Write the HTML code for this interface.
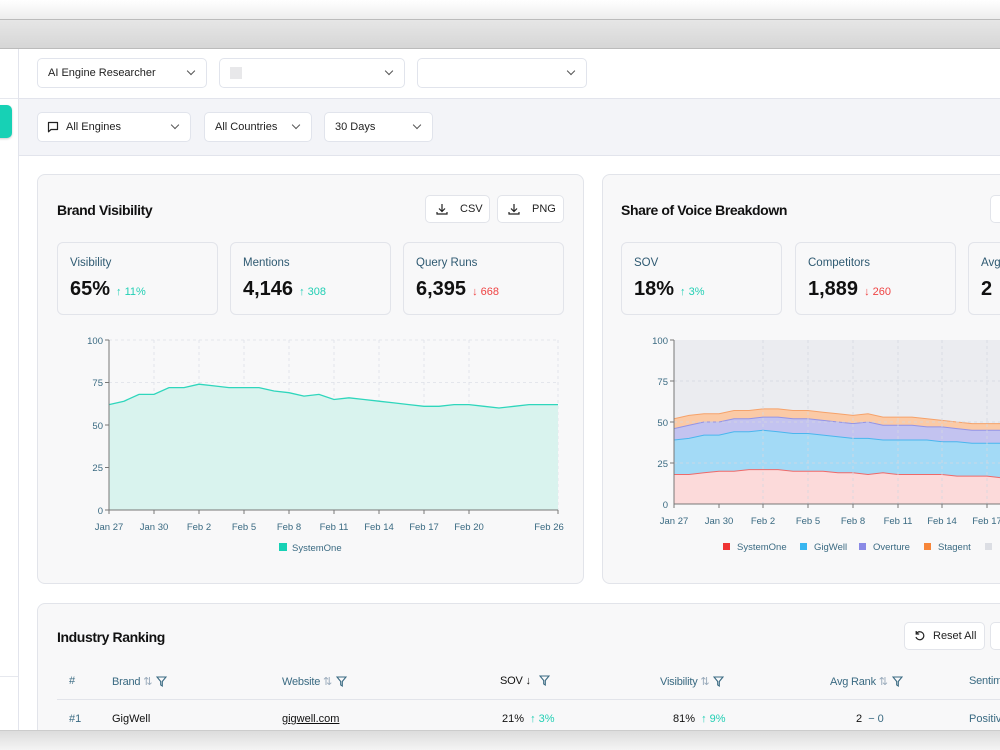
<!DOCTYPE html>
<html><head><meta charset="utf-8"><style>
*{box-sizing:border-box;margin:0;padding:0}
html,body{width:1000px;height:750px;overflow:hidden}
body{font-family:"Liberation Sans",sans-serif;background:#fff;position:relative;color:#111}
.a{position:absolute}
.sel{position:absolute;height:30px;border:1px solid #e1e4ec;border-radius:5px;background:#fff;font-size:11px;color:#222;padding:0 10px;line-height:28px}
.chev{position:absolute;right:12px;top:9px;width:6px;height:6px;border-right:1.3px solid #555;border-bottom:1.3px solid #555;transform:rotate(45deg)}
.card{position:absolute;background:#f8f8f9;border:1px solid #e2e4ea;border-radius:8px}
.ttl{position:absolute;font-size:14px;font-weight:bold;color:#111;letter-spacing:-0.4px}
.stat{position:absolute;width:161px;height:73px;border:1px solid #e2e4ea;border-radius:6px;background:#f8f8f9}
.stat .l{position:absolute;left:12px;top:14px;font-size:11.5px;color:#2f5a72}
.stat .v{position:absolute;left:12px;top:35px;font-size:20px;font-weight:bold;color:#111}
.up{color:#22cfb4;font-size:11px;font-weight:normal;margin-left:6px}
.dn{color:#ef4444;font-size:11px;font-weight:normal;margin-left:6px}
.btn{position:absolute;height:28px;border:1px solid #e2e4ea;border-radius:5px;background:#fff;font-size:11px;line-height:26px;color:#222}
.ax{font-size:9.5px;fill:#3a6a82}
.th{position:absolute;top:675px;font-size:11px;color:#3a6a82;letter-spacing:-0.2px}
.td{position:absolute;top:713px;font-size:11px;color:#111}
.fn{display:inline-block;vertical-align:-2px;margin-left:4px}
</style></head><body>
<div class="a" style="left:0;top:0;width:1000px;height:20px;background:linear-gradient(#fff,#ececec)"></div>
<div class="a" style="left:0;top:19px;width:1000px;height:30px;background:linear-gradient(#e6e6e6,#d6d6d6);border-top:1px solid #bbb;border-bottom:1px solid #bbb"></div>
<div class="a" style="left:18px;top:49px;width:1px;height:681px;background:#e2e4ec"></div>
<div class="a" style="left:0;top:98px;width:18px;height:1px;background:#e6e8ee"></div>
<div class="a" style="left:0;top:676px;width:18px;height:1px;background:#e6e8ee"></div>
<div class="a" style="left:-6px;top:105px;width:18px;height:33px;background:#17d1b5;border-radius:5px;box-shadow:0 1px 2px rgba(0,0,0,.2)"></div>
<div class="sel" style="left:37px;top:58px;width:170px">AI Engine Researcher<span class="chev"></span></div>
<div class="sel" style="left:219px;top:58px;width:186px"><span class="a" style="left:10px;top:8px;width:12px;height:12px;background:#e8e8ea"></span><span class="chev"></span></div>
<div class="sel" style="left:417px;top:58px;width:170px"><span class="chev"></span></div>
<div class="a" style="left:19px;top:98px;width:981px;height:58px;background:#f3f4f8;border-top:1px solid #e2e4ec;border-bottom:1px solid #e2e4ec"></div>
<div class="sel" style="left:37px;top:112px;width:154px;padding-left:28px">
<svg class="a" style="left:9px;top:8px" width="12" height="12" viewBox="0 0 12 12"><path d="M1.5 1.5h9v7h-6.5l-2.5 2.3z" fill="none" stroke="#222" stroke-width="1.2" stroke-linejoin="round"/></svg>All Engines<span class="chev"></span></div>
<div class="sel" style="left:204px;top:112px;width:108px">All Countries<span class="chev"></span></div>
<div class="sel" style="left:324px;top:112px;width:109px">30 Days<span class="chev"></span></div>

<div class="card" style="left:37px;top:174px;width:547px;height:410px"></div>
<div class="ttl" style="left:57px;top:202px">Brand Visibility</div>
<div class="btn" style="left:425px;top:195px;width:65px;padding-left:34px">CSV<svg class="a" style="left:10px;top:7px" width="12" height="12" viewBox="0 0 12 12"><path d="M6 1v7M3 5.5l3 3 3-3M1 9v2h10V9" fill="none" stroke="#222" stroke-width="1.2"/></svg></div>
<div class="btn" style="left:497px;top:195px;width:67px;padding-left:34px">PNG<svg class="a" style="left:10px;top:7px" width="12" height="12" viewBox="0 0 12 12"><path d="M6 1v7M3 5.5l3 3 3-3M1 9v2h10V9" fill="none" stroke="#222" stroke-width="1.2"/></svg></div>
<div class="stat" style="left:57px;top:242px"><div class="l">Visibility</div><div class="v">65%<span class="up">↑ 11%</span></div></div>
<div class="stat" style="left:230px;top:242px"><div class="l">Mentions</div><div class="v">4,146<span class="up">↑ 308</span></div></div>
<div class="stat" style="left:403px;top:242px"><div class="l">Query Runs</div><div class="v">6,395<span class="dn">↓ 668</span></div></div>

<svg class="a" style="left:0;top:0" width="600" height="600">
<g stroke="#dde0e8" stroke-dasharray="3,3" stroke-width="0.8">
<line x1="109" y1="340" x2="558" y2="340"/><line x1="109" y1="382.5" x2="558" y2="382.5"/><line x1="109" y1="425" x2="558" y2="425"/><line x1="109" y1="467.5" x2="558" y2="467.5"/>
<line x1="199" y1="340" x2="199" y2="510"/><line x1="244" y1="340" x2="244" y2="510"/><line x1="289" y1="340" x2="289" y2="510"/><line x1="334" y1="340" x2="334" y2="510"/><line x1="379" y1="340" x2="379" y2="510"/><line x1="424" y1="340" x2="424" y2="510"/><line x1="469" y1="340" x2="469" y2="510"/><line x1="558" y1="340" x2="558" y2="510"/><line x1="154" y1="340" x2="154" y2="510"/>
</g>
<path d="M109 404.6L124 401.2L139 394.4L154 394.4L169 387.6L184 387.6L199 384.2L214 385.9L229 387.6L244 387.6L259 387.6L274 391L289 392.7L304 396.1L319 394.4L334 399.5L349 397.8L364 399.5L379 401.2L394 402.9L409 404.6L424 406.3L439 406.3L454 404.6L469 404.6L484 406.3L499 408L514 406.3L529 404.6L544 404.6L558 404.6L558 510L109 510Z" fill="#d9f3ee"/>
<path d="M109 404.6L124 401.2L139 394.4L154 394.4L169 387.6L184 387.6L199 384.2L214 385.9L229 387.6L244 387.6L259 387.6L274 391L289 392.7L304 396.1L319 394.4L334 399.5L349 397.8L364 399.5L379 401.2L394 402.9L409 404.6L424 406.3L439 406.3L454 404.6L469 404.6L484 406.3L499 408L514 406.3L529 404.6L544 404.6L558 404.6" fill="none" stroke="#2fd6bc" stroke-width="1.3"/>
<g stroke="#777" stroke-width="1"><line x1="109" y1="340" x2="109" y2="510"/><line x1="109" y1="510" x2="558" y2="510"/>
<line x1="105" y1="340" x2="109" y2="340"/><line x1="105" y1="382.5" x2="109" y2="382.5"/><line x1="105" y1="425" x2="109" y2="425"/><line x1="105" y1="467.5" x2="109" y2="467.5"/><line x1="105" y1="510" x2="109" y2="510"/>
<line x1="109" y1="510" x2="109" y2="514"/><line x1="154" y1="510" x2="154" y2="514"/><line x1="199" y1="510" x2="199" y2="514"/><line x1="244" y1="510" x2="244" y2="514"/><line x1="289" y1="510" x2="289" y2="514"/><line x1="334" y1="510" x2="334" y2="514"/><line x1="379" y1="510" x2="379" y2="514"/><line x1="424" y1="510" x2="424" y2="514"/><line x1="469" y1="510" x2="469" y2="514"/><line x1="558" y1="510" x2="558" y2="514"/></g>
<g class="ax" text-anchor="end"><text x="103" y="344">100</text><text x="103" y="386">75</text><text x="103" y="429">50</text><text x="103" y="471">25</text><text x="103" y="514">0</text></g>
<g class="ax" text-anchor="middle"><text x="109" y="530">Jan 27</text><text x="154" y="530">Jan 30</text><text x="199" y="530">Feb 2</text><text x="244" y="530">Feb 5</text><text x="289" y="530">Feb 8</text><text x="334" y="530">Feb 11</text><text x="379" y="530">Feb 14</text><text x="424" y="530">Feb 17</text><text x="469" y="530">Feb 20</text><text x="549" y="530">Feb 26</text></g>
<rect x="279" y="543" width="8" height="8" fill="#17d1b5"/><text class="ax" x="292" y="551">SystemOne</text>
</svg>

<div class="card" style="left:602px;top:174px;width:420px;height:410px"></div>
<div class="ttl" style="left:621px;top:202px">Share of Voice Breakdown</div>
<div class="btn" style="left:990px;top:195px;width:40px"></div>
<div class="stat" style="left:621px;top:242px"><div class="l">SOV</div><div class="v">18%<span class="up">↑ 3%</span></div></div>
<div class="stat" style="left:795px;top:242px"><div class="l">Competitors</div><div class="v">1,889<span class="dn">↓ 260</span></div></div>
<div class="stat" style="left:968px;top:242px"><div class="l">Avg</div><div class="v">2</div></div>
<svg class="a" style="left:600px;top:0" width="400" height="600">
<g transform="translate(-600,0)">
<rect x="674" y="340" width="340" height="164" fill="#ebecf0"/>
<path d="M674 418.7L689 415.4L704 413.8L719 413.8L734 410.5L749 410.5L763 408.9L778 408.9L793 410.5L808 410.5L823 412.2L838 413.8L853 415.4L868 413.8L883 417.1L898 417.1L912 417.1L927 418.7L942 420.4L957 422L972 423.6L987 423.6L1002 423.6L1002 504L674 504Z" fill="#fbcaa6" stroke="#f6a26a" stroke-width="1"/>
<path d="M674 428.6L689 425.3L704 422L719 422L734 418.7L749 418.7L763 417.1L778 417.1L793 418.7L808 418.7L823 420.4L838 422L853 423.6L868 422L883 425.3L898 425.3L912 425.3L927 426.9L942 426.9L957 428.6L972 430.2L987 430.2L1002 430.2L1002 504L674 504Z" fill="#c3c3f0" stroke="#9494e6" stroke-width="1"/>
<path d="M674 440L689 438.4L704 435.1L719 435.1L734 431.8L749 431.8L763 430.2L778 431.8L793 433.5L808 433.5L823 435.1L838 436.8L853 438.4L868 438.4L883 440L898 440L912 440L927 440L942 441.7L957 441.7L972 443.3L987 443.3L1002 443.3L1002 504L674 504Z" fill="#a3daf6" stroke="#4ab6ee" stroke-width="1"/>
<path d="M674 474.5L689 474.5L704 472.8L719 471.2L734 471.2L749 469.6L763 469.6L778 469.6L793 471.2L808 471.2L823 471.2L838 472.8L853 472.8L868 474.5L883 472.8L898 474.5L912 474.5L927 474.5L942 474.5L957 476.1L972 476.1L987 476.1L1002 477.8L1002 504L674 504Z" fill="#fcdada" stroke="#ee6a6a" stroke-width="1"/>
<g stroke="#d5d8e0" stroke-dasharray="3,3" stroke-width="0.8"><line x1="674" y1="381" x2="1000" y2="381"/><line x1="674" y1="422" x2="1000" y2="422"/><line x1="674" y1="463" x2="1000" y2="463"/>
<line x1="763" y1="340" x2="763" y2="504"/><line x1="808" y1="340" x2="808" y2="504"/><line x1="853" y1="340" x2="853" y2="504"/><line x1="898" y1="340" x2="898" y2="504"/><line x1="942" y1="340" x2="942" y2="504"/><line x1="987" y1="340" x2="987" y2="504"/></g>
<g stroke="#777"><line x1="674" y1="340" x2="674" y2="504"/><line x1="674" y1="504" x2="1000" y2="504"/>
<line x1="670" y1="340" x2="674" y2="340"/><line x1="670" y1="381" x2="674" y2="381"/><line x1="670" y1="422" x2="674" y2="422"/><line x1="670" y1="463" x2="674" y2="463"/>
<line x1="674" y1="504" x2="674" y2="508"/><line x1="719" y1="504" x2="719" y2="508"/><line x1="763" y1="504" x2="763" y2="508"/><line x1="808" y1="504" x2="808" y2="508"/><line x1="853" y1="504" x2="853" y2="508"/><line x1="898" y1="504" x2="898" y2="508"/><line x1="942" y1="504" x2="942" y2="508"/><line x1="987" y1="504" x2="987" y2="508"/></g>
<g class="ax" text-anchor="end"><text x="668" y="344">100</text><text x="668" y="385">75</text><text x="668" y="426">50</text><text x="668" y="467">25</text><text x="668" y="508">0</text></g>
<g class="ax" text-anchor="middle"><text x="674" y="524">Jan 27</text><text x="719" y="524">Jan 30</text><text x="763" y="524">Feb 2</text><text x="808" y="524">Feb 5</text><text x="853" y="524">Feb 8</text><text x="898" y="524">Feb 11</text><text x="942" y="524">Feb 14</text><text x="987" y="524">Feb 17</text></g>
<g class="ax"><rect x="723" y="543" width="7" height="7" fill="#ef3434"/><text x="737" y="550">SystemOne</text>
<rect x="800" y="543" width="7" height="7" fill="#38b6f0"/><text x="814" y="550">GigWell</text>
<rect x="859" y="543" width="7" height="7" fill="#8a8ae6"/><text x="873" y="550">Overture</text>
<rect x="924" y="543" width="7" height="7" fill="#f7863a"/><text x="938" y="550">Stagent</text>
<rect x="985" y="543" width="7" height="7" fill="#dcdee4"/></g>
</g></svg>

<div class="card" style="left:37px;top:603px;width:990px;height:135px"></div>
<div class="ttl" style="left:57px;top:629px">Industry Ranking</div>
<div class="btn" style="left:904px;top:622px;width:81px;padding-left:28px">Reset All<svg class="a" style="left:9px;top:7px" width="12" height="12" viewBox="0 0 12 12"><path d="M2.5 3.5A4 4 0 1 1 2 7M2.2 1v3h3" fill="none" stroke="#222" stroke-width="1.2"/></svg></div>
<div class="btn" style="left:990px;top:622px;width:40px"></div>
<div class="th" style="left:69px">#</div>
<div class="th" style="left:112px">Brand <span style="color:#9ab">⇅</span><svg class="fn" width="11" height="11" viewBox="0 0 11 11"><path d="M1 1h9L6.3 5.5V10L4.7 9V5.5z" fill="none" stroke="#3a6a82" stroke-width="1.1"/></svg></div>
<div class="th" style="left:282px">Website <span style="color:#9ab">⇅</span><svg class="fn" width="11" height="11" viewBox="0 0 11 11"><path d="M1 1h9L6.3 5.5V10L4.7 9V5.5z" fill="none" stroke="#3a6a82" stroke-width="1.1"/></svg></div>
<div class="th" style="left:500px;color:#111">SOV ↓<svg class="fn" style="margin-left:8px" width="11" height="11" viewBox="0 0 11 11"><path d="M1 1h9L6.3 5.5V10L4.7 9V5.5z" fill="none" stroke="#3a6a82" stroke-width="1.1"/></svg></div>
<div class="th" style="left:660px">Visibility <span style="color:#9ab">⇅</span><svg class="fn" width="11" height="11" viewBox="0 0 11 11"><path d="M1 1h9L6.3 5.5V10L4.7 9V5.5z" fill="none" stroke="#3a6a82" stroke-width="1.1"/></svg></div>
<div class="th" style="left:830px">Avg Rank <span style="color:#9ab">⇅</span><svg class="fn" width="11" height="11" viewBox="0 0 11 11"><path d="M1 1h9L6.3 5.5V10L4.7 9V5.5z" fill="none" stroke="#3a6a82" stroke-width="1.1"/></svg></div>
<div class="th" style="left:969px">Sentiment</div>
<div class="a" style="left:57px;top:699px;width:960px;height:1px;background:#e2e4ea"></div>
<div class="td" style="left:69px;color:#3a6a82">#1</div>
<div class="td" style="left:112px">GigWell</div>
<div class="td" style="left:282px;text-decoration:underline">gigwell.com</div>
<div class="td" style="left:502px">21% <span class="up" style="margin-left:3px">↑ 3%</span></div>
<div class="td" style="left:673px">81% <span class="up" style="margin-left:3px">↑ 9%</span></div>
<div class="td" style="left:856px">2 <span style="color:#3a6a82;margin-left:3px">− 0</span></div>
<div class="td" style="left:969px;color:#3a6a82">Positive</div>

<div class="a" style="left:0;top:730px;width:1000px;height:20px;background:linear-gradient(#dcdcdc,#f4f4f4);border-top:1px solid #ccc;z-index:5"></div>
</body></html>
